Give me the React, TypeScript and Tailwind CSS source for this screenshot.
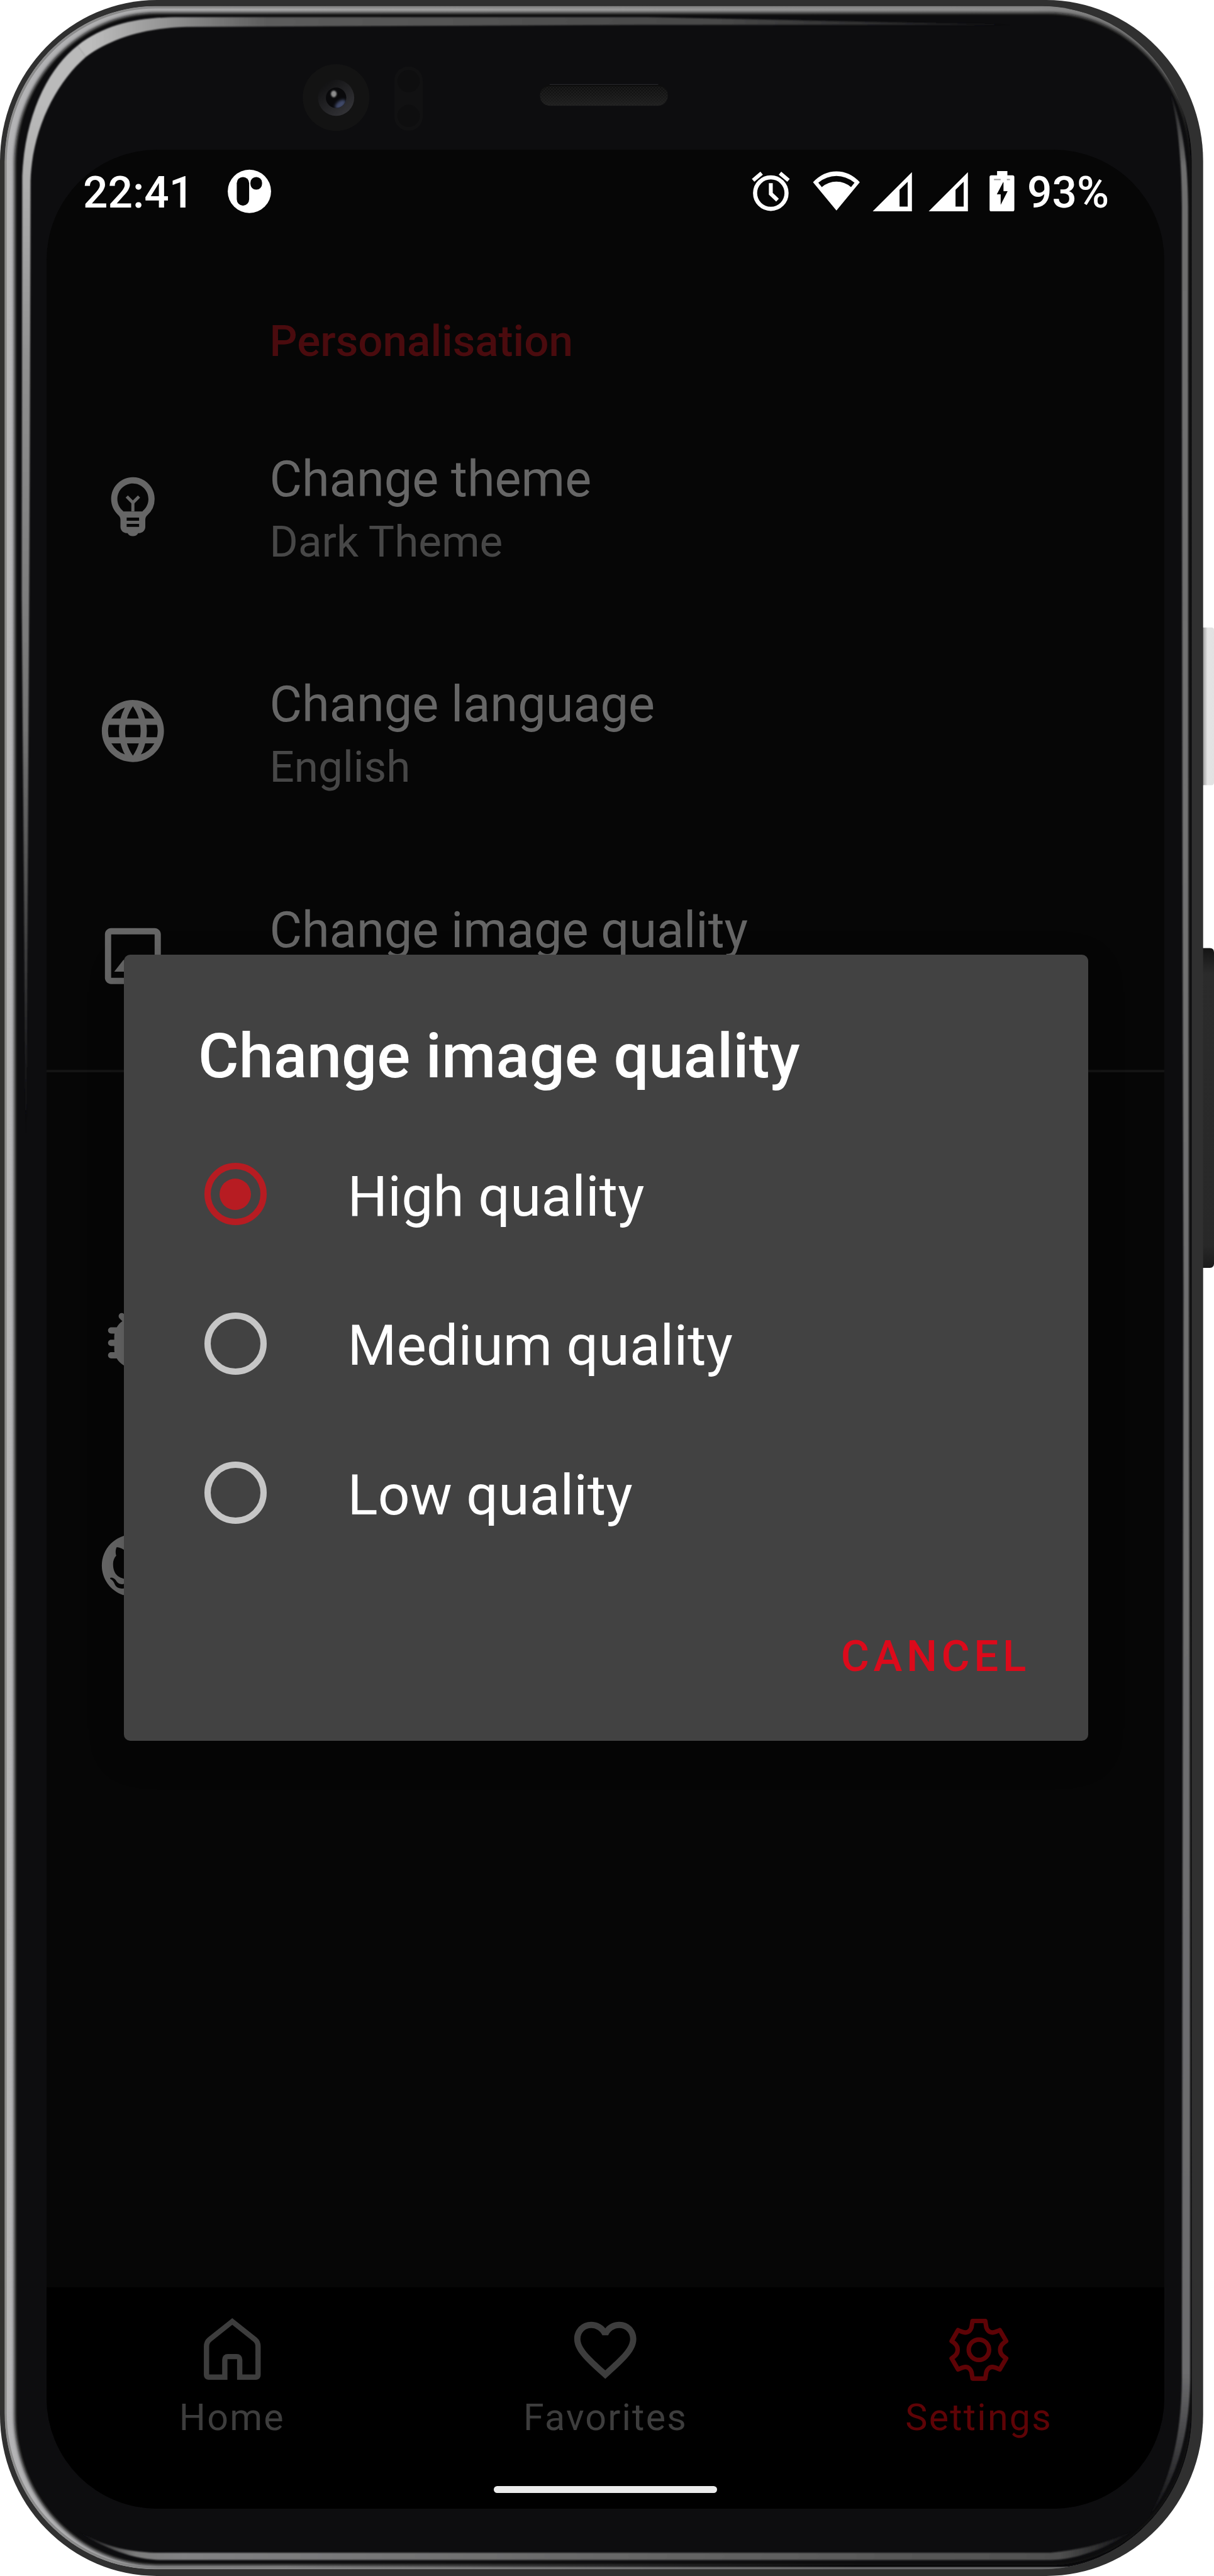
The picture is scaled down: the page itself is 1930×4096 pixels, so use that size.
import React from "react";
import { MdFavoriteBorder, MdLanguage, MdOutlineEmojiObjects, MdOutlineImage } from "react-icons/md";

/* Body highlights, camera, sensors and earpiece of the device. */
function Hardware() {
  return (
    <svg className="absolute inset-0 h-[4096px] w-[1930px]" viewBox="0 0 2346 4980" preserveAspectRatio="none" fill="none">
      <defs>
        <linearGradient id="rim" x1="0" y1="0" x2="2346" y2="0" gradientUnits="userSpaceOnUse">
          <stop offset="0" stopColor="#b4b4b6" />
          <stop offset="0.3" stopColor="#a0a0a0" />
          <stop offset="0.85" stopColor="#8c8c8c" />
          <stop offset="0.96" stopColor="#6c6c6c" />
          <stop offset="0.975" stopColor="#333" />
          <stop offset="0.98" stopColor="#0d0d0f" />
        </linearGradient>
        <linearGradient id="rimShade" x1="1500" y1="3200" x2="2346" y2="4980" gradientUnits="userSpaceOnUse">
          <stop offset="0.6" stopColor="#0d0d0f" stopOpacity="0" />
          <stop offset="0.84" stopColor="#0d0d0f" stopOpacity="1" />
        </linearGradient>
        <linearGradient id="sheenTop" x1="60" y1="0" x2="1960" y2="0" gradientUnits="userSpaceOnUse">
          <stop offset="0" stopColor="#c2c2c2" />
          <stop offset="0.06" stopColor="#bdbdbd" />
          <stop offset="0.24" stopColor="#5c5c5c" />
          <stop offset="0.7" stopColor="#484848" />
          <stop offset="1" stopColor="#161618" />
        </linearGradient>
        <linearGradient id="sheenLeft" x1="0" y1="200" x2="0" y2="2220" gradientUnits="userSpaceOnUse">
          <stop offset="0" stopColor="#bababa" />
          <stop offset="0.25" stopColor="#909090" />
          <stop offset="0.6" stopColor="#747474" />
          <stop offset="0.8" stopColor="#444" />
          <stop offset="1" stopColor="#0d0d0f" />
        </linearGradient>
        <linearGradient id="sheenRight" x1="0" y1="180" x2="0" y2="4870" gradientUnits="userSpaceOnUse">
          <stop offset="0" stopColor="#1a1a1c" />
          <stop offset="0.03" stopColor="#6e6e6e" />
          <stop offset="0.3" stopColor="#727272" />
          <stop offset="0.94" stopColor="#6c6c6e" />
          <stop offset="0.97" stopColor="#404042" />
          <stop offset="1" stopColor="#0d0d0f" />
        </linearGradient>
        <linearGradient id="sheenBottom" x1="150" y1="0" x2="2190" y2="0" gradientUnits="userSpaceOnUse">
          <stop offset="0" stopColor="#0d0d0f" />
          <stop offset="0.055" stopColor="#7c7c7c" />
          <stop offset="0.1" stopColor="#828284" />
          <stop offset="0.5" stopColor="#686868" />
          <stop offset="0.93" stopColor="#505050" />
          <stop offset="1" stopColor="#0d0d0f" />
        </linearGradient>
        <linearGradient id="lens" x1="625" y1="160" x2="675" y2="220" gradientUnits="userSpaceOnUse">
          <stop offset="0" stopColor="#111112" />
          <stop offset="1" stopColor="#343438" />
        </linearGradient>
        <linearGradient id="ear" x1="0" y1="163" x2="0" y2="204" gradientUnits="userSpaceOnUse">
          <stop offset="0" stopColor="#0c0c0c" />
          <stop offset="0.4" stopColor="#121212" />
          <stop offset="1" stopColor="#1e1e1e" />
        </linearGradient>
        <linearGradient id="keyLight" x1="2325" y1="0" x2="2346" y2="0" gradientUnits="userSpaceOnUse">
          <stop offset="0" stopColor="#a2a2a2" />
          <stop offset="0.4" stopColor="#e4e4e4" />
          <stop offset="1" stopColor="#e2e2e2" />
        </linearGradient>
        <linearGradient id="keyDark" x1="0" y1="1833" x2="0" y2="2451" gradientUnits="userSpaceOnUse">
          <stop offset="0" stopColor="#141414" />
          <stop offset="0.08" stopColor="#2b2b2b" />
          <stop offset="0.93" stopColor="#282828" />
          <stop offset="1" stopColor="#1a1a1a" />
        </linearGradient>
        <pattern id="mesh" width="6" height="6" patternUnits="userSpaceOnUse">
          <rect width="3" height="3" fill="#2a2a2a" />
          <rect x="3" y="3" width="3" height="3" fill="#2a2a2a" />
        </pattern>
        <filter id="b1" x="-20%" y="-20%" width="140%" height="140%"><feGaussianBlur stdDeviation="1.3" /></filter>
        <filter id="b4" x="-5%" y="-5%" width="110%" height="110%"><feGaussianBlur stdDeviation="3.4" /></filter>
        <filter id="b3" x="-60%" y="-60%" width="220%" height="220%"><feGaussianBlur stdDeviation="2.6" /></filter>
        <clipPath id="inside"><rect x="9" y="12" width="2294" height="4955" rx="290" ry="302" /></clipPath>
        <clipPath id="pupil"><circle cx="649.5" cy="189" r="19.7" /></clipPath>
      </defs>

      <path d="M2320 1213H2341Q2346 1213 2346 1218V1512Q2346 1518 2341 1518H2320Z" fill="url(#keyLight)" />
      <path d="M2320 1833H2338Q2346 1833 2346 1841V2443Q2346 2451 2338 2451H2320Z" fill="url(#keyDark)" />
      <rect width="2325" height="4980" rx="303" ry="312" fill="#303030" />

      <g clipPath="url(#inside)">
        <rect x="9" y="12" width="2294" height="4955" rx="290" ry="302" fill="url(#rim)" />
        <rect x="9" y="12" width="2294" height="4955" rx="290" ry="302" fill="url(#rimShade)" />
        <rect x="10.5" y="14" width="2330" height="4951" rx="290" ry="302" stroke="#828282" strokeWidth="5" opacity="0.8" />
        <rect x="28" y="24.5" width="2273" height="4935" rx="276" ry="292" fill="#0d0d0f" filter="url(#b4)" />
        <rect x="34" y="30" width="2262" height="4924" rx="272" ry="284" fill="#0d0d0f" />
      </g>

      <g filter="url(#b1)">
        <path d="M43 340C48 220 95 130 150 88L166 110C108 160 62 250 59 350Q58 900 55 1400Q53 1900 50 2200Q46 1700 42 1150Z" fill="url(#sheenLeft)" />
        <path d="M150 88C205 45 270 33 350 33H1250L1960 48H1250 L360 52C280 54 215 74 166 110Z" fill="url(#sheenTop)" />
        <path d="M150 4893C205 4925 255 4935 310 4935H2030C2090 4930 2140 4915 2186 4895C2140 4925 2080 4949 2030 4949H310C255 4948 200 4925 150 4893Z" fill="url(#sheenBottom)" />
        <path d="M2262 180C2282 235 2295 290 2296 400Q2296 1400 2298 2800Q2300 3600 2300 4600C2298 4710 2275 4790 2222 4863C2262 4790 2283 4710 2284 4600Q2285 3600 2287 2500Q2284 1400 2284 400C2283 290 2275 235 2262 180Z" fill="url(#sheenRight)" />
      </g>

      <circle cx="649.5" cy="188.6" r="64.5" fill="#131313" />
      <circle cx="649.5" cy="189" r="35" fill="url(#lens)" />
      <circle cx="649.5" cy="189" r="19.7" fill="#09090b" />
      <g clipPath="url(#pupil)">
        <ellipse cx="658" cy="202" rx="12" ry="7" fill="#3f4869" transform="rotate(-38 658 202)" filter="url(#b3)" />
        <ellipse cx="645" cy="181.5" rx="5.5" ry="6.5" fill="#8e8e8e" filter="url(#b1)" />
      </g>
      <rect x="762" y="128.7" width="55" height="124" rx="27" fill="#111112" />
      <circle cx="789.5" cy="157" r="21.5" fill="#0e0e0f" />
      <circle cx="789.5" cy="224" r="21.5" fill="#0e0e0f" />
      <rect x="1043.5" y="163" width="247" height="41.5" rx="20" fill="url(#ear)" />
      <rect x="1043.5" y="167" width="247" height="37" rx="18" fill="url(#mesh)" opacity="0.5" />
      <path d="M1062 163.5H1272" stroke="#262629" strokeWidth="1.5" />
    </svg>
  );
}

function StatusBar() {
  return (
    <div className="flex h-[140px] shrink-0 items-center text-[69.500px] font-medium leading-none text-white">
      <div className="flex w-[1119px] items-center pl-[58px]">
        <span className="-mt-[2px] w-[230px] whitespace-nowrap">22:41</span>
        <svg className="h-[82px] w-[69px]" viewBox="440 324.4 84 100">
          <circle cx="482" cy="369.8" r="42" fill="#fff" />
          <rect x="457.5" y="342" width="24" height="55.5" rx="12" fill="#060606" />
          <rect x="484" y="342" width="22.5" height="24.5" rx="11" fill="#060606" />
        </svg>
      </div>
      <svg className="h-[82px] w-[66px]" viewBox="1450 324.4 80 100" fill="none" stroke="#fff" strokeWidth="8">
        <circle cx="1489.3" cy="373.3" r="30.5" />
        <path d="M1489.3 354v20.5l13 12.5M1455 348.5l16.5-14M1523.6 348.5l-16.5-14" strokeWidth="7.5" />
      </svg>
      <svg className="ml-[33px] h-[82px] w-[76px]" viewBox="1570 324.4 92 100" fill="#fff" fillRule="evenodd">
        <path d="M1570.3 352Q1590 331 1615.7 331Q1641.500 331 1661 352L1615.700 407ZM1580.500 353L1587.300 361.700Q1600 351 1615.700 351Q1631.500 351 1644 361.700L1650.800 353Q1634 340 1615.700 340Q1597 340 1580.500 353Z" />
      </svg>
      <svg className="ml-[19px] h-[82px] w-[64px]" viewBox="1686 324.4 78 100" fill="#fff" fillRule="evenodd">
        <path d="M1686.500 408.500H1762.500V332.500ZM1738.500 366.700L1754.300 351.200V399.500H1738.500Z" />
      </svg>
      <svg className="ml-[25px] h-[82px] w-[64px]" viewBox="1686 324.4 78 100" fill="#fff" fillRule="evenodd">
        <path d="M1686.500 408.500H1762.500V332.500ZM1738.500 366.700L1754.300 351.200V399.500H1738.500Z" />
      </svg>
      <svg className="ml-[32px] h-[82px] w-[41px]" viewBox="1912 324.4 50 100">
        <path d="M1928 330.600h20v8h10q3.500 0 3.500 3.500v63q0 3.500 -3.500 3.500h-41q-3.500 0 -3.500 -3.500v-63q0 -3.500 3.500 -3.500h11z" fill="#fff" />
        <path d="M1922 347h13M1947 347h6" stroke="#999" strokeWidth="2.500" />
        <path d="M1939.800 352L1927.500 375.500H1935V396L1948.500 369.500H1940.500V352Z" fill="#060606" />
      </svg>
      <span className="-mt-[2px] ml-[20px] whitespace-nowrap">93%</span>
    </div>
  );
}

function BugIcon() {
  return (
    <svg className="size-[118.5px]" viewBox="0 0 24 24" fill="currentColor">
      <path d="M19 8h-1.810a5.985 5.985 0 0 0-1.820-1.960l.930-.930a.996.996 0 1 0-1.410-1.410l-1.470 1.470C12.960 5.060 12.490 5 12 5s-.960.060-1.410.170L9.110 3.700A.996.996 0 1 0 7.700 5.110l.920.930C7.880 6.550 7.260 7.220 6.810 8H5c-.550 0-1 .450-1 1s.450 1 1 1h1.090c-.050.330-.090.660-.090 1v1H5c-.550 0-1 .450-1 1s.450 1 1 1h1v1c0 .340.040.670.090 1H5c-.550 0-1 .450-1 1s.450 1 1 1h1.810c1.040 1.790 2.970 3 5.190 3s4.150-1.210 5.190-3H19c.550 0 1-.450 1-1s-.450-1-1-1h-1.090c.050-.330.090-.660.090-1v-1h1c.550 0 1-.450 1-1s-.450-1-1-1h-1v-1c0-.340-.040-.670-.090-1H19c.550 0 1-.450 1-1s-.450-1-1-1z" />
    </svg>
  );
}

function GithubIcon() {
  return (
    <svg className="size-[118.5px]" viewBox="0 0 24 24" fill="currentColor">
      <path d="M12 2A10 10 0 0 0 2 12c0 4.420 2.870 8.170 6.840 9.500c.5.080.660-.230.660-.5v-1.690c-2.770.6-3.360-1.340-3.360-1.340c-.460-1.160-1.110-1.470-1.110-1.470c-.910-.620.070-.6.070-.6c1 .070 1.530 1.030 1.530 1.030c.870 1.520 2.340 1.070 2.910.830c.090-.650.350-1.090.630-1.340c-2.220-.250-4.550-1.110-4.550-4.920c0-1.110.380-2 1.030-2.710c-.1-.250-.450-1.290.1-2.640c0 0 .840-.270 2.750 1.020c.790-.220 1.650-.330 2.500-.330c.850 0 1.710.110 2.500.330c1.910-1.290 2.750-1.020 2.750-1.020c.550 1.350.2 2.390.1 2.640c.650.710 1.030 1.600 1.030 2.710c0 3.820-2.340 4.660-4.570 4.910c.360.310.690.920.690 1.850V21c0 .270.160.590.670.5C19.140 20.160 22 16.420 22 12A10 10 0 0 0 12 2Z" />
    </svg>
  );
}

function HomeIcon() {
  return (
    <svg className="size-[118.5px]" viewBox="0 0 24 24" fill="none" stroke="currentColor" strokeWidth="1.700">
      <path d="M3.700 20.100V10.900C3.700 9.800 4.100 9.200 4.700 8.700L12 2.900L19.300 8.700C19.900 9.200 20.300 9.800 20.300 10.900V20.100Q20.300 20.800 19.700 20.800H14.400V15.200Q14.400 14.200 13.400 14.200H10.600Q9.600 14.200 9.600 15.200V20.800H4.300Q3.700 20.800 3.700 20.100Z" />
    </svg>
  );
}

function GearIcon() {
  return (
    <svg className="size-[118.5px] overflow-visible" viewBox="31 31 432 432" fill="none" stroke="currentColor" strokeWidth="26" strokeLinejoin="round">
      <g transform="translate(247 247) scale(1.2) translate(-247 -247)" strokeWidth="22.500">
        <circle cx="247" cy="247" r="59" transform="translate(41.200 41.200) scale(0.8333)" className="hidden" />
      </g>
      <circle cx="247" cy="247" r="59" />
      <path d="M210 80H284L288 106C290 130 305 147 325 147C340 147 352 139 368 133L405 197C385 210 370 222 370 247C370 272 385 284 405 297L368 361C352 355 340 347 325 347C305 347 290 364 288 388L284 414H210L206 388C204 364 189 347 169 347C154 347 142 355 126 361L89 297C109 284 124 272 124 247C124 222 109 210 89 197L126 133C142 139 154 147 169 147C189 147 204 130 206 106Z" />
    </svg>
  );
}

function Row({ icon, title, sub }: { icon: React.ReactNode; title?: string; sub?: string }) {
  return (
    <div className="flex h-[358.3px] shrink-0 items-center pl-[78px] text-[#666]">
      {icon}
      <div className="ml-[158px] flex h-[189px] flex-col gap-[11px] whitespace-nowrap pt-[6px]">
        <div className="text-[79.300px] leading-[94px]">{title}</div>
        <div className="text-[69.200px] leading-[84px] text-[#474747]">{sub}</div>
      </div>
    </div>
  );
}

function Option({ label, selected }: { label: string; selected?: boolean }) {
  return (
    <div className="flex h-[237.4px] items-center pl-[128px]">
      <div
        className={
          selected
            ? "flex size-[99px] items-center justify-center rounded-full border-[10px] border-[#b71c22]"
            : "size-[99px] rounded-full border-[10px] border-[#c6c6c6]"
        }
      >
        {selected && <div className="size-[50px] rounded-full bg-[#b71c22]" />}
      </div>
      <span className="ml-[129px] whitespace-nowrap pt-[8px] text-[89.300px] leading-[100px] tracking-[0.150px] text-white">{label}</span>
    </div>
  );
}

function Tab({ icon, label, active }: { icon: React.ReactNode; label: string; active?: boolean }) {
  return (
    <div className={active ? "flex flex-1 flex-col items-center gap-[19px] text-[#5e0306]" : "flex flex-1 flex-col items-center gap-[19px] text-[#3d3d3d]"}>
      {icon}
      <span className="text-[59.200px] leading-[60px] tracking-[2.200px]">{label}</span>
    </div>
  );
}

export default function App() {
  return (
    <div className="relative h-[4096px] w-[1930px] overflow-hidden bg-white pl-[74px] pt-[238px] font-[Roboto,sans-serif]">
      <Hardware />
      <div className="relative flex h-[3750.500px] w-[1777px] flex-col overflow-hidden rounded-[176px] bg-[#060606]">
        <StatusBar />
        <div className="mt-[125px] pl-[354.500px] text-[69.200px] font-medium leading-[80px] text-[#4a0b0e]">Personalisation</div>
        <div className="mt-[41.500px]">
          <Row icon={<MdOutlineEmojiObjects className="size-[118.5px]" />} title="Change theme" sub="Dark Theme" />
          <Row icon={<MdLanguage className="size-[118.5px]" />} title="Change language" sub="English" />
          <Row icon={<MdOutlineImage className="size-[118.5px]" />} title="Change image quality" />
        </div>
        <div className="mt-[2px] h-[4px] shrink-0 bg-[#141414]" />
        <div className="mt-[246px]">
          <Row icon={<BugIcon />} />
          <Row icon={<GithubIcon />} />
        </div>

        <nav className="mt-auto h-[352px] shrink-0 bg-black">
          <div className="-mx-[2px] flex h-[316px] pt-[40px]">
            <Tab icon={<HomeIcon />} label="Home" />
            <Tab icon={<MdFavoriteBorder className="size-[118.5px]" />} label="Favorites" />
            <Tab icon={<GearIcon />} label="Settings" active />
          </div>
          <div className="mx-auto h-[11px] w-[355px] rounded-full bg-[#ebebeb]" />
        </nav>

        <div className="absolute left-[122.500px] top-[1280.400px] h-[1249.400px] w-[1533.500px] rounded-[10px] bg-[#424242] pt-[102px] shadow-[0_20px_60px_rgba(0,0,0,0.2)]">
          <h2 className="pl-[118.500px] text-[99px] font-medium leading-[118px] text-white">Change image quality</h2>
          <div className="mt-[41.700px]">
            <Option label="High quality" selected />
            <Option label="Medium quality" />
            <Option label="Low quality" />
          </div>
          <div className="mt-[102px] pr-[92px] text-right text-[69.200px] font-medium leading-[80px] tracking-[6.600px] text-[#dc0a1b]">CANCEL</div>
        </div>
      </div>
    </div>
  );
}
